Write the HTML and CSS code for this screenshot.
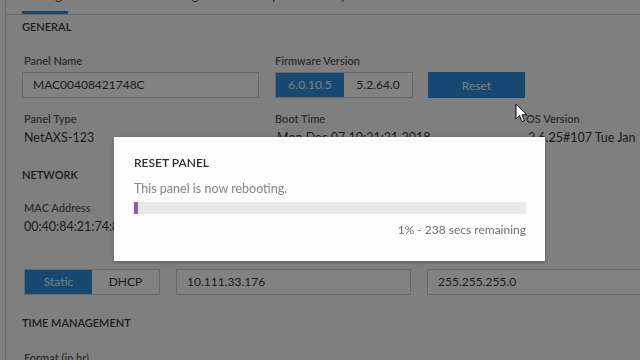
FILE: index.html
```html
<!DOCTYPE html>
<html lang="en">
<head>
    <meta charset="UTF-8">
    <meta name="viewport" content="width=device-width, initial-scale=1.0">
    <title>Panel Settings</title>
    <link rel="stylesheet" href="styles.css">
</head>
<body>
    <div class="page">
        <div class="tabs">
            <div class="tab active"><span>Settings</span></div>
            <div class="tab"><span>Host Comm Configuration</span></div>
            <div class="tab"><span>Inputs</span></div>
            <div class="tab"><span>Outputs</span></div>
            <div class="tab"><span>Readers</span></div>
            <div class="tab"><span>Advanced</span></div>
        </div>

        <div class="content">
            <h2 class="section first">GENERAL</h2>
            <div class="row">
                <div class="field name-field">
                    <label>Panel Name</label>
                    <div class="input">MAC00408421748C</div>
                </div>
                <div class="field fw-field">
                    <label>Firmware Version</label>
                    <div class="controls">
                        <div class="segmented">
                            <div class="seg selected">6.0.10.5</div>
                            <div class="seg">5.2.64.0</div>
                        </div>
                        <button class="btn">Reset</button>
                    </div>
                </div>
            </div>
            <div class="row info-row">
                <div class="info col-a">
                    <label>Panel Type</label>
                    <div class="value">NetAXS-123</div>
                </div>
                <div class="info col-b">
                    <label>Boot Time</label>
                    <div class="value">Mon Dec 07 10:21:21 2018</div>
                </div>
                <div class="info col-c">
                    <label>OS Version</label>
                    <div class="value">2.6.25#107 Tue Jan 16 10:22:14 2018</div>
                </div>
            </div>

            <h2 class="section">NETWORK</h2>
            <div class="row info-row">
                <div class="info col-a">
                    <label>MAC Address</label>
                    <div class="value">00:40:84:21:74:8C</div>
                </div>
            </div>
            <div class="row net-row">
                <div class="segmented mode">
                    <div class="seg selected">Static</div>
                    <div class="seg">DHCP</div>
                </div>
                <div class="input ip">10.111.33.176</div>
                <div class="input mask">255.255.255.0</div>
            </div>

            <h2 class="section time">TIME MANAGEMENT</h2>
            <div class="row info-row last">
                <div class="info col-a">
                    <label>Format (in hr)</label>
                </div>
            </div>
        </div>
    </div>

    <div class="backdrop"></div>

    <div class="modal">
        <h3>RESET PANEL</h3>
        <p class="message">This panel is now rebooting.</p>
        <div class="progress"><div class="progress-fill" style="width: 1%"></div></div>
        <p class="remaining">1% - 238 secs remaining</p>
    </div>

    <svg class="cursor" width="14" height="21" viewBox="0 0 14 21">
        <path d="M1 1 L1 16 L4.5 12.5 L7 18.5 L9.5 17.5 L7 11.8 L12 11.8 Z" fill="#fff" stroke="#000" stroke-width="1" stroke-linejoin="round"/>
    </svg>
</body>
</html>
```

FILE: styles.css
```css
body {
    margin: 0;
    padding: 0;
    font-family: 'Lato', 'Open Sans', sans-serif;
    background: #fafafa;
    color: #333;
    overflow: hidden;
}
.page {
    margin-left: 5px;
    border-left: 1px solid #d6d6d6;
    height: 360px;
}
.tabs {
    display: flex;
    height: 14px;
    overflow: hidden;
    border-bottom: 1px solid #cfcfcf;
    padding-left: 16px;
    gap: 22px;
}
.tab {
    font-size: 13px;
    color: #555;
    height: 14px;
    box-sizing: border-box;
}
.tab span {
    display: block;
    margin-top: -12px;
    line-height: 14px;
    white-space: nowrap;
}
.tab.active {
    border-bottom: 3px solid #2c8ad8;
    width: 46px;
}
.content {
    padding-left: 16px;
}
.section {
    margin: 22px 0 0;
    font-size: 11px;
    line-height: 14px;
    font-weight: 600;
    color: #3a3a3a;
}
.section.first {
    margin-top: 5px;
}
.section.time {
    margin-top: 21px;
}
.row {
    display: flex;
}
.field label, .info label {
    display: block;
    font-size: 11px;
    line-height: 14px;
    color: #5a5a5a;
    font-weight: 600;
    margin-left: 2px;
}
.fw-field label, .col-b label, .col-c label,
.col-b .value, .col-c .value {
    margin-left: 0;
}
.row:not(.info-row):not(.net-row) {
    margin-top: 20px;
}
.field .input, .field .controls {
    margin-top: 4px;
}
.name-field {
    width: 237px;
    margin-right: 16px;
}
.input {
    box-sizing: border-box;
    height: 26px;
    border: 1px solid #cdcdcd;
    background: #ffffff;
    font-size: 12px;
    line-height: 24px;
    padding-left: 10px;
    color: #383838;
}
.controls {
    display: flex;
    gap: 15px;
}
.segmented {
    display: flex;
    height: 26px;
    border: 1px solid #cdcdcd;
    box-sizing: border-box;
    background: #fff;
}
.seg {
    width: 68px;
    text-align: center;
    font-size: 12px;
    line-height: 24px;
    color: #383838;
}
.seg.selected {
    background: #2d8ee0;
    color: #f0f6ff;
}
.btn {
    width: 97px;
    height: 26px;
    border: none;
    background: #2d8ee0;
    color: #f0f6ff;
    font-family: inherit;
    font-size: 12px;
}
.info-row {
    margin-top: 14px;
}
.info .value {
    margin-top: 4px;
    margin-left: 2px;
    font-size: 12.5px;
    line-height: 16px;
    color: #383838;
    white-space: nowrap;
}
.col-a {
    width: 253px;
}
.col-b {
    width: 251px;
}
.col-c {
    flex: 1;
    overflow: hidden;
}
.section + .info-row {
    margin-top: 19px;
}
.section + .info-row.last {
    margin-top: 21px;
}
.net-row {
    margin-top: 34px;
    margin-left: 2px;
    gap: 16px;
}
.mode .seg {
    width: 67px;
}
.ip {
    width: 235px;
}
.mask {
    flex: 1;
    border-right: none;
}
.backdrop {
    position: fixed;
    inset: 0;
    background: rgba(0, 0, 0, 0.49);
}
.modal {
    position: fixed;
    left: 114px;
    top: 137px;
    width: 431px;
    height: 124px;
    box-sizing: border-box;
    padding: 19px 19px 0 20px;
    background: #fdfdfd;
    box-shadow: 0 1px 4px rgba(0, 0, 0, 0.3);
}
.modal h3 {
    margin: 0;
    font-size: 12px;
    line-height: 14px;
    font-weight: 600;
    color: #2e2e2e;
}
.message {
    margin: 11px 0 0;
    font-size: 12.5px;
    line-height: 16px;
    color: #858585;
}
.progress {
    margin-top: 5px;
    height: 12px;
    background: #e9e9e9;
}
.progress-fill {
    height: 100%;
    min-width: 4px;
    background: #8c5cb0;
}
.remaining {
    margin: 9px 0 0;
    text-align: right;
    font-size: 12px;
    line-height: 14px;
    color: #6e6e6e;
}
.cursor {
    position: fixed;
    left: 515px;
    top: 103px;
}
```
